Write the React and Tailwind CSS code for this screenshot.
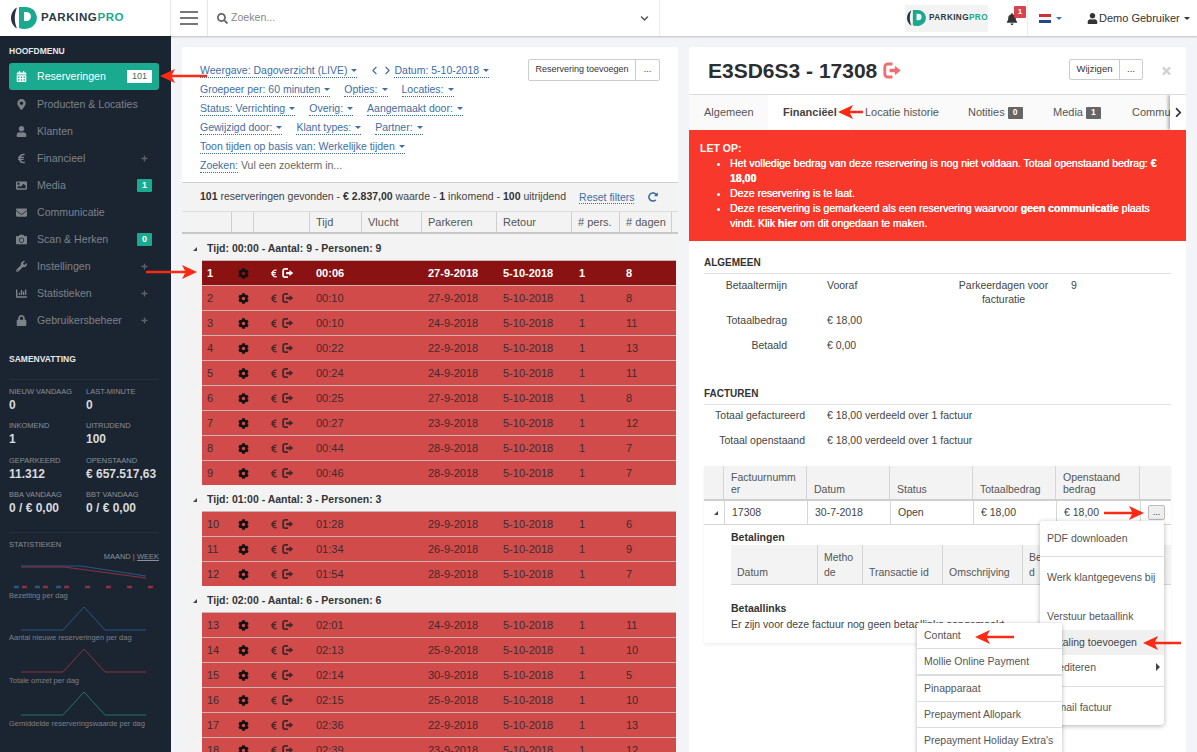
import {
  FaBell, FaCalendarAlt, FaCamera, FaChartBar, FaChevronDown, FaChevronRight, FaCog, FaEnvelope, FaEuroSign,
  FaImage, FaLock, FaMapMarkerAlt, FaPlus, FaRedoAlt, FaSearch, FaTimes, FaUser, FaWrench,
} from 'react-icons/fa';
import { ChevronLeft, ChevronRight } from 'lucide-react';

const menu = [
  { label: 'Reserveringen', icon: FaCalendarAlt, active: true, count: '101' },
  { label: 'Producten & Locaties', icon: FaMapMarkerAlt },
  { label: 'Klanten', icon: FaUser },
  { label: 'Financieel', icon: FaEuroSign, plus: true },
  { label: 'Media', icon: FaImage, badge: '1' },
  { label: 'Communicatie', icon: FaEnvelope },
  { label: 'Scan & Herken', icon: FaCamera, badge: '0' },
  { label: 'Instellingen', icon: FaWrench, plus: true },
  { label: 'Statistieken', icon: FaChartBar, plus: true },
  { label: 'Gebruikersbeheer', icon: FaLock, plus: true },
];

const stats = [
  ['NIEUW VANDAAG', '0', 'LAST-MINUTE', '0'],
  ['INKOMEND', '1', 'UITRIJDEND', '100'],
  ['GEPARKEERD', '11.312', 'OPENSTAAND', '€ 657.517,63'],
  ['BBA VANDAAG', '0 / € 0,00', 'BBT VANDAAG', '0 / € 0,00'],
];

const groups = [
  {
    title: 'Tijd: 00:00 - Aantal: 9 - Personen: 9',
    rows: [
      ['1', '00:06', '27-9-2018', '8'],
      ['2', '00:10', '27-9-2018', '8'],
      ['3', '00:10', '24-9-2018', '11'],
      ['4', '00:22', '22-9-2018', '13'],
      ['5', '00:24', '24-9-2018', '11'],
      ['6', '00:25', '27-9-2018', '8'],
      ['7', '00:27', '23-9-2018', '12'],
      ['8', '00:44', '28-9-2018', '7'],
      ['9', '00:46', '28-9-2018', '7'],
    ],
  },
  {
    title: 'Tijd: 01:00 - Aantal: 3 - Personen: 3',
    rows: [
      ['10', '01:28', '29-9-2018', '6'],
      ['11', '01:34', '26-9-2018', '9'],
      ['12', '01:54', '28-9-2018', '7'],
    ],
  },
  {
    title: 'Tijd: 02:00 - Aantal: 6 - Personen: 6',
    rows: [
      ['13', '02:01', '24-9-2018', '11'],
      ['14', '02:13', '25-9-2018', '10'],
      ['15', '02:14', '30-9-2018', '5'],
      ['16', '02:15', '25-9-2018', '10'],
      ['17', '02:36', '22-9-2018', '13'],
      ['18', '02:39', '23-9-2018', '12'],
    ],
  },
];

const filterLines = [
  ['Groepeer per: 60 minuten', 'Opties:', 'Locaties:'],
  ['Status: Verrichting', 'Overig:', 'Aangemaakt door:'],
  ['Gewijzigd door:', 'Klant types:', 'Partner:'],
  ['Toon tijden op basis van: Werkelijke tijden'],
];

const Caret = ({ className = '' }) => (
  <span className={`inline-block w-0 h-0 border-x-[3px] border-x-transparent border-t-[3px] border-t-current align-middle ${className}`} />
);

const LogOut = ({ className = '', size = 12 }) => (
  <svg viewBox="0 0 16 14" width={size} height={size} className={className}>
    <path d="M8 1.500H4A2.500 2.500 0 0 0 1.500 4v6A2.500 2.500 0 0 0 4 12.500h4" fill="none" stroke="currentColor" strokeWidth="2.400" />
    <path d="M5.500 5.500H10V3l5 4-5 4V8.500H5.500z" fill="currentColor" />
  </svg>
);

// red annotation arrow, tip points left or right
const Arrow = ({ x, y, length, dir = 'left' }) => (
  <svg
    width={length}
    height="14"
    viewBox={`0 0 ${length} 14`}
    className="absolute z-30"
    style={{ left: x, top: y - 7, transform: dir === 'right' ? 'scaleX(-1)' : undefined }}
  >
    <path d={`M0 7 L15 0 L12 5.800 L${length} 5.800 L${length} 8.200 L12 8.200 L15 14 Z`} fill="#fb2a14" />
  </svg>
);

const Logo = ({ small }) => (
  <div className={`flex items-center ${small ? 'gap-[3px]' : 'gap-[4px]'}`}>
    <svg viewBox="0 0 26 22" width={small ? 19 : 26} height={small ? 16 : 22}>
      <path d="M6 .5C2 2.500 0 7 0 11s2 8.500 6 10.500C4.500 18 3.800 14.500 3.800 11S4.500 4 6 .5z" fill="#27343f" />
      <path fillRule="evenodd" d="M8 0h7a10.800 10.800 0 0 1 3 21.200C15 22.300 11 22.200 8 21zM13 5v9h2.500a4.500 4.500 0 0 0 0-9z" fill="#1aa98f" />
    </svg>
    <span className={`font-bold ${small ? 'text-[8.200px] tracking-[0.4px]' : 'text-[11.500px] tracking-[0.6px]'} text-[#2a3a45]`}>
      PARKING<span className="text-[#1aa98f]">PRO</span>
    </span>
  </div>
);

const Spark = ({ points, color }) => (
  <svg width="150" height="30" viewBox="0 0 150 30" className="block">
    <polyline points={points} fill="none" stroke={color} strokeWidth="1" />
  </svg>
);

const Sidebar = () => (
  <aside className="w-[171px] shrink-0 bg-[#1b2532] overflow-hidden">
    <div className="px-[9px] pt-[9px] text-[8.500px] font-bold text-[#e6e8ea] leading-3">HOOFDMENU</div>
    <div className="mt-[6px]">
      {menu.map((m) => (
        <div
          key={m.label}
          className={`ml-[9px] mr-[12px] h-[27px] flex items-center pl-[7px] pr-[7px] text-[10.600px] ${m.active ? 'bg-[#1aaa8f] rounded-[3px] text-white h-[26px] mb-px' : 'text-[#7d8289]'}`}
        >
          <m.icon className="w-[11px] h-[11px] shrink-0" />
          <span className="ml-[10px] flex-1 whitespace-nowrap">{m.label}</span>
          {m.count && <span className="w-[25px] h-[13px] bg-white text-[#3d6a60] text-[9px] flex items-center justify-center rounded-[1px]">{m.count}</span>}
          {m.badge && <span className="w-[15px] h-[13px] bg-[#1aaa8f] text-white text-[9px] font-bold flex items-center justify-center rounded-[1px]">{m.badge}</span>}
          {m.plus && <FaPlus className="w-[7px] h-[7px] mr-1 text-[#5c636b]" />}
        </div>
      ))}
    </div>

    <div className="px-[9px] mt-[19px] text-[8.500px] font-bold text-[#e6e8ea] leading-3">SAMENVATTING</div>
    <div className="ml-[9px] mr-[12px] mt-[14px] border-t border-[#262f3c] pt-[6px] h-[153px]">
      {stats.map((s) => (
        <div key={s[0]} className="grid grid-cols-[77px_1fr] h-[34.300px]">
          <div>
            <div className="text-[7.500px] leading-[11px] text-[#8a8f95] whitespace-nowrap">{s[0]}</div>
            <div className="text-[12px] font-bold leading-[17px] text-[#d8dadd] whitespace-nowrap">{s[1]}</div>
          </div>
          <div>
            <div className="text-[7.500px] leading-[11px] text-[#8a8f95] whitespace-nowrap">{s[2]}</div>
            <div className="text-[12px] font-bold leading-[17px] text-[#d8dadd] whitespace-nowrap">{s[3]}</div>
          </div>
        </div>
      ))}
    </div>

    <div className="ml-[9px] mr-[12px] border-t border-[#262f3c] pt-[6px] h-[170px]">
      <div className="text-[7.500px] leading-[11px] text-[#8a8f95]">STATISTIEKEN</div>
      <div className="text-right text-[7.500px] leading-[11px] mt-[1px] text-[#8a8f95]">MAAND | <span className="underline">WEEK</span></div>
      <svg width="150" height="28" viewBox="0 0 150 28" className="block mt-[1px]">
        <polyline points="12,3 72,3 137,13" fill="none" stroke="#2b5488" strokeWidth="1.200" />
        <polyline points="12,4 55,4 137,15" fill="none" stroke="#8c323e" strokeWidth="1.200" />
        <path d="M5 24h5M26 24h5M47 24h5" stroke="#2b5488" strokeWidth="2.400" />
        <path d="M13 24h5M34 24h5M55 24h5M76 24h5M97 24h5M118 24h5M139 24h5" stroke="#8c323e" strokeWidth="2.400" />
      </svg>
      <div className="text-[7.500px] leading-[11px] text-[#7b8087] whitespace-nowrap mt-[-1px]">Bezetting per dag</div>
      <Spark points="12,29 54,29 75,6 96,29 137,29" color="#2b5488" />
      <div className="text-[7.500px] leading-[11px] text-[#7b8087] whitespace-nowrap mt-[1px]">Aantal nieuwe reserveringen per dag</div>
      <Spark points="12,29 54,29 75,6 96,29 137,29" color="#8c323e" />
      <div className="text-[7.500px] leading-[11px] text-[#7b8087] whitespace-nowrap mt-[2px]">Totale omzet per dag</div>
      <Spark points="12,29 54,29 75,6 96,29 137,29" color="#1d7767" />
      <div className="text-[7.500px] leading-[11px] text-[#7b8087] whitespace-nowrap mt-[2px]">Gemiddelde reserveringswaarde per dag</div>
    </div>
  </aside>
);

const Topbar = () => (
  <header className="relative z-10 h-[36px] bg-white shadow-[0_1px_2px_rgba(0,0,0,0.22)] flex items-center text-[#444]">
    <div className="w-[171px] h-full flex items-center pl-[11px] border-r border-[#e6e6e6]">
      <Logo />
    </div>
    <div className="w-[37px] h-full flex flex-col gap-[3.500px] justify-center px-[9px] border-r border-[#e6e6e6]">
      <span className="h-[2.500px] bg-[#777]" />
      <span className="h-[2.500px] bg-[#777]" />
      <span className="h-[2.500px] bg-[#777]" />
    </div>
    <div className="w-[452px] h-full flex items-center pl-[9px] pr-[10px] border-r border-[#ececec]">
      <FaSearch className="w-[11px] h-[11px] text-[#666]" />
      <span className="ml-[3px] flex-1 text-[10.600px] text-[#888]">Zoeken...</span>
      <FaChevronDown className="w-[9px] h-[9px] text-[#555]" />
    </div>
    <div className="flex-1 h-full flex items-center">
      <div className="ml-[245px] w-[83px] h-[27px] bg-[#f3f3f3] flex items-center pl-[2px]">
        <Logo small />
      </div>
      <div className="relative ml-[18px] w-[22px] h-full flex items-center">
        <FaBell className="w-[12px] h-[12px] text-[#333] mt-[2px]" />
        <span className="absolute left-[8px] top-[6px] w-[12px] h-[12px] bg-[#d9434e] rounded-[1px] text-white text-[8px] font-bold flex items-center justify-center">1</span>
      </div>
      <div className="ml-[-1px] h-full border-l border-[#ececec] pl-[11px] flex items-center">
        <div className="w-[12px] h-[9px] flex flex-col">
          <span className="h-[3px] bg-[#c8303c]" />
          <span className="h-[3px] bg-[#f4f4f4]" />
          <span className="h-[3px] bg-[#21468b]" />
        </div>
        <Caret className="ml-[5px] text-[#3a76b8]" />
      </div>
      <FaUser className="ml-[25px] w-[11px] h-[11px] text-[#333]" />
      <span className="ml-[1px] text-[11px] text-[#333] whitespace-nowrap">Demo Gebruiker</span>
      <Caret className="ml-[4px] text-[#333]" />
    </div>
  </header>
);

const FilterLink = ({ children }) => (
  <span className="inline-flex items-center text-[#3e6ea3] border-b border-dotted border-[#3e6ea3] leading-[13px] whitespace-nowrap">
    {children}
    <Caret className="ml-[4px]" />
  </span>
);

const headerCols = 'grid grid-cols-[50px_22px_56px_52px_60px_75px_75px_48px_52px]';

const LeftPanel = () => (
  <section className="w-[496px] bg-white flex flex-col overflow-hidden rounded-t-[2px]">
    <div className="relative h-[136px] shrink-0 border-b border-[#cfcfcf] pt-[17px] pl-[18px] text-[10.500px]">
      <div className="h-[19px] flex items-start">
        <FilterLink>Weergave: Dagoverzicht (LIVE)</FilterLink>
        <span className="ml-[11px] flex text-[#3e6ea3]">
          <ChevronLeft size={13} strokeWidth={2} />
          <ChevronRight size={13} strokeWidth={2} />
        </span>
        <FilterLink>Datum: 5-10-2018</FilterLink>
      </div>
      {filterLines.map((line) => (
        <div key={line[0]} className="h-[19px] flex items-start gap-[14px]">
          {line.map((l) => <FilterLink key={l}>{l}</FilterLink>)}
        </div>
      ))}
      <div className="h-[19px] flex items-start">
        <span className="text-[#3e6ea3] border-b border-dotted border-[#3e6ea3] leading-[13px]">Zoeken:</span>
        <span className="ml-[3px] leading-[13px] text-[#666]">Vul een zoekterm in...</span>
      </div>
      <div className="absolute right-[18px] top-[12px] h-[22px] flex text-[9px] text-[#333] border border-[#ccc] rounded-[2px]">
        <span className="w-[107px] flex items-center justify-center border-r border-[#ccc]">Reservering toevoegen</span>
        <span className="w-[23px] flex items-center justify-center">...</span>
      </div>
    </div>

    <div className="h-[28px] shrink-0 bg-[#f3f3f3] flex items-center pl-[18px] text-[10.500px] text-[#444] whitespace-nowrap">
      <span><b className="text-[#333]">101</b> reserveringen gevonden - <b className="text-[#333]">€ 2.837,00</b> waarde - <b className="text-[#333]">1</b> inkomend - <b className="text-[#333]">100</b> uitrijdend</span>
      <span className="ml-[13px] text-[#3e6ea3] border-b border-dotted border-[#3e6ea3] leading-[12px]">Reset filters</span>
      <FaRedoAlt className="ml-[14px] w-[10px] h-[10px] text-[#3e6ea3]" />
    </div>

    <div className={`${headerCols} h-[23px] shrink-0 bg-[#f3f3f3] border-y border-y-[#dcdcdc] border-b-[#c8c8c8] border-b-2 text-[11px] text-[#555]`}>
      {['', '', '', 'Tijd', 'Vlucht', 'Parkeren', 'Retour', '# pers.', '# dagen'].map((h, i) => (
        <div key={i} className="border-r border-[#cfcfcf] flex items-center pl-[6px]">{h}</div>
      ))}
    </div>

    <div className="flex-1 bg-[#f3f3f3] overflow-hidden">
      {groups.map((g) => (
        <div key={g.title}>
          <div className="h-[26px] flex items-center pt-[3px] pl-[11px] text-[10.500px] font-bold text-[#333]">
            <span className="w-0 h-0 border-l-[4px] border-l-transparent border-b-[4px] border-b-[#444]" />
            <span className="ml-[10px]">{g.title}</span>
          </div>
          {g.rows.map((r) => {
            const selected = r[0] === '1';
            return (
              <div
                key={r[0]}
                className={`ml-5 mr-[2px] h-[25px] border-t border-[#cdb4b4] grid grid-cols-[30px_22px_56px_52px_60px_75px_75px_48px_52px] items-center text-[11px] ${selected ? 'bg-[#8a1212] text-white font-bold' : 'bg-[#d14b4b] text-[#3d2b2b]'}`}
              >
                <span className="pl-[5px]">{r[0]}</span>
                <span className="flex justify-center"><FaCog className="w-[11px] h-[11px] text-[#111]" /></span>
                <span className="flex items-center pl-[16px]">
                  <FaEuroSign className="w-[8px] h-[9px]" />
                  <LogOut className="ml-[4px]" />
                </span>
                <span className="pl-[6px]">{r[1]}</span>
                <span />
                <span className="pl-[6px]">{r[2]}</span>
                <span className="pl-[6px]">5-10-2018</span>
                <span className="pl-[7px]">1</span>
                <span className="pl-[6px]">{r[3]}</span>
              </div>
            );
          })}
        </div>
      ))}
    </div>
  </section>
);

const tabs = [
  { label: 'Algemeen', w: 'w-[79px]' },
  { label: 'Financiëel', w: 'w-[82px]', active: true },
  { label: 'Locatie historie', w: 'w-[103px]' },
  { label: 'Notities', badge: '0', w: 'w-[85px]' },
  { label: 'Media', badge: '1', w: 'w-[79px]' },
  { label: 'Communicatie', w: 'w-[90px]' },
];

const Section = ({ title, children, className = '' }) => (
  <div className={className}>
    <div className="text-[10px] font-bold text-[#333] leading-3 pb-[4px] border-b border-[#e2e2e2]">{title}</div>
    {children}
  </div>
);

const RightPanel = () => (
  <section className="relative w-[497px] ml-[11px] bg-white text-[10.500px] text-[#444] overflow-hidden rounded-t-[2px]">
    <div className="relative h-[48px] border-b border-[#dcdcdc] flex items-center pl-[19px]">
      <h1 className="text-[21px] font-bold text-[#2b2f33] leading-none whitespace-nowrap">E3SD6S3 - 17308</h1>
      <LogOut size={19} className="ml-[6px] text-[#ef6f70]" />
      <div className="absolute right-[43px] top-[12px] h-[21px] flex text-[9.500px] text-[#333] border border-[#ccc] rounded-[2px]">
        <span className="w-[50px] flex items-center justify-center border-r border-[#ccc]">Wijzigen</span>
        <span className="w-[22px] flex items-center justify-center">...</span>
      </div>
      <FaTimes className="absolute right-[14px] top-[18px] w-[11px] h-[12px] text-[#cfcfcf]" />
    </div>

    <div className="relative h-[35px] bg-[#fafafa] flex text-[11px] text-[#555] overflow-hidden whitespace-nowrap">
      {tabs.map((t) => (
        <div key={t.label} className={`${t.w} shrink-0 h-full flex items-center pl-[15px] ${t.active ? 'bg-white font-bold text-[#444]' : ''}`}>
          {t.label}
          {t.badge && <span className="ml-[3px] w-[15px] h-[12px] bg-[#666] text-white text-[8.500px] font-bold flex items-center justify-center rounded-[1px]">{t.badge}</span>}
        </div>
      ))}
      <div className="absolute right-0 top-0 w-[16px] h-full bg-white shadow-[-2px_0_3px_rgba(0,0,0,0.3)] flex items-center justify-center">
        <FaChevronRight className="w-[9px] h-[11px] text-[#333]" />
      </div>
    </div>

    <div className="h-[111px] bg-[#f8382b] text-white font-bold text-[10.500px] leading-[15px] pl-[11px] pr-[20px] pt-[11px]">
      <div>LET OP:</div>
      <ul className="list-disc pl-[30px] font-normal [text-shadow:0.2px_0_0_white]">
        <li>Het volledige bedrag van deze reservering is nog niet voldaan. Totaal openstaand bedrag: <b>€ 18,00</b></li>
        <li>Deze reservering is te laat.</li>
        <li>Deze reservering is gemarkeerd als een reservering waarvoor <b>geen communicatie</b> plaats vindt. Klik <b>hier</b> om dit ongedaan te maken.</li>
      </ul>
    </div>

    <div className="px-[15px]">
      <Section title="ALGEMEEN" className="pt-[16px]">
        <div className="grid grid-cols-[83px_1fr] gap-x-[40px] auto-rows-[25.500px] mt-[4px] h-[96px]">
          <div className="text-right leading-[14px]">Betaaltermijn</div>
          <div className="flex leading-[14px]">
            <span className="w-[117px]">Vooraf</span>
            <span className="w-[119px] text-center">Parkeerdagen voor facturatie</span>
            <span className="ml-[8px]">9</span>
          </div>
          <div className="text-right pt-[9px] leading-[14px]">Totaalbedrag</div>
          <div className="pt-[9px] leading-[14px]">€ 18,00</div>
          <div className="text-right pt-[9px] leading-[14px]">Betaald</div>
          <div className="pt-[9px] leading-[14px]">€ 0,00</div>
        </div>
      </Section>

      <Section title="FACTUREN" className="pt-[14px]">
        <div className="grid grid-cols-[101px_1fr] gap-x-[22px] auto-rows-[25px] mt-[3px] leading-[14px]">
          <div className="text-right whitespace-nowrap">Totaal gefactureerd</div>
          <div>€ 18,00 verdeeld over 1 factuur</div>
          <div className="text-right whitespace-nowrap">Totaal openstaand</div>
          <div>€ 18,00 verdeeld over 1 factuur</div>
        </div>
      </Section>

      <div className="mt-[8px] w-[467px] pb-[12px] shadow-[0_2px_3px_rgba(0,0,0,0.06)]">
        <div className="grid grid-cols-[20px_83px_83px_83px_83px_84px_1fr] h-[35px] bg-[#f3f3f3] border-b-2 border-[#cfcfcf] text-[#555] leading-[12px]">
          {['', 'Factuurnummer', 'Datum', 'Status', 'Totaalbedrag', 'Openstaand bedrag', ''].map((h, i) => (
            <div key={i} className={`flex items-end pl-[7px] pr-[7px] pb-[4px] ${i < 6 ? 'border-r border-[#d6d6d6]' : ''}`}>
              <span className={i === 1 ? 'break-all' : ''}>{h}</span>
            </div>
          ))}
        </div>
        <div className="grid grid-cols-[20px_83px_83px_83px_83px_84px_1fr] h-[24px] border-b border-[#d6d6d6] items-center">
          <span className="ml-[10px] w-0 h-0 border-l-[4px] border-l-transparent border-b-[4px] border-b-[#444]" />
          {['17308', '30-7-2018', 'Open', '€ 18,00', '€ 18,00'].map((c, i) => (
            <div key={i} className="h-full flex items-center pl-[7px] border-l border-[#d6d6d6]">{c}</div>
          ))}
          <div className="h-full flex items-center justify-end pr-[6px] border-l border-[#d6d6d6]">
            <span className="w-[17px] h-[15px] bg-[#eee] border border-[#bbb] rounded-[2px] flex items-center justify-center text-[9px] text-[#333]">...</span>
          </div>
        </div>
        <div className="pl-[27px] pt-[5px]">
          <div className="font-bold text-[#333] leading-[14px]">Betalingen</div>
          <div className="grid grid-cols-[87px_45px_80px_80px_45px_1fr] h-[40px] bg-[#f3f3f3] border-b border-[#d6d6d6] text-[#555] mt-[1px] leading-[15px]">
            {['Datum', 'Methode', 'Transactie id', 'Omschrijving', 'Betaald', ''].map((h, i) => (
              <div key={i} className={`flex items-end pl-[6px] pr-[6px] pb-[4px] ${i < 5 ? 'border-r border-[#d6d6d6]' : ''}`}>
                <span className={i === 1 || i === 4 ? 'break-all' : ''}>{h}</span>
              </div>
            ))}
          </div>
          <div className="font-bold text-[#333] mt-[16px] leading-[14px]">Betaallinks</div>
          <div className="mt-[2px] leading-[14px]">Er zijn voor deze factuur nog geen betaallinks aangemaakt.</div>
        </div>
      </div>
    </div>

    {/* dropdown van de factuur */}
    <div className="absolute z-10 left-[351px] top-[474px] w-[124px] h-[204px] bg-white rounded-[3px] shadow-[0_1px_5px_rgba(0,0,0,0.3)] text-[10.500px] text-[#555]">
      <div className="h-[36px] border-b border-[#ddd] pl-[7px] pt-[10px] leading-[14px]">PDF downloaden</div>
      <div className="h-[40px] pl-[7px] pt-[13px] leading-[14px] whitespace-nowrap">Werk klantgegevens bij</div>
      <div className="h-[33px] pl-[7px] pt-[12px] leading-[14px]">Verstuur betaallink</div>
      <div className="h-[25px] bg-[#f0f0f0] pl-[7px] flex items-center text-[#444]">Betaling toevoegen</div>
      <div className="h-[32px] border-b border-[#ddd] pl-[7px] pt-[5px] leading-[14px] flex justify-between pr-[4px]">
        Crediteren
        <span className="mt-[3px] w-0 h-0 border-y-[4px] border-y-transparent border-l-[4px] border-l-[#444]" />
      </div>
      <div className="pl-[7px] pt-[13px] leading-[14px]">E-mail factuur</div>
    </div>

    {/* submenu betaling toevoegen */}
    <div className="absolute z-20 left-[228px] top-[576px] w-[145px] bg-white rounded-[2px] shadow-[0_1px_4px_rgba(0,0,0,0.3)] text-[10.500px] text-[#555]">
      <div className="h-[26px] border-b border-[#ddd] pl-[7px] flex items-center">Contant</div>
      <div className="h-[27px] border-b-2 border-[#ddd] pl-[7px] flex items-center">Mollie Online Payment</div>
      <div className="h-[26px] border-b border-[#ddd] pl-[7px] flex items-center">Pinapparaat</div>
      <div className="h-[26px] border-b border-[#ddd] pl-[7px] flex items-center">Prepayment Allopark</div>
      <div className="h-[26px] pl-[7px] flex items-center whitespace-nowrap">Prepayment Holiday Extra's</div>
    </div>
  </section>
);

export default function App() {
  return (
    <div className="relative w-[1197px] h-[752px] overflow-hidden flex flex-col bg-[#f3f4f7] font-['Liberation_Sans',Arial,sans-serif]">
      <Topbar />
      <div className="flex flex-1 min-h-0">
        <Sidebar />
        <main className="flex-1 flex pl-[11px] pt-[11px]">
          <LeftPanel />
          <RightPanel />
        </main>
      </div>
      <Arrow x={160} y={76} length={47} />
      <Arrow x={146} y={272} length={51} dir="right" />
      <Arrow x={838} y={112} length={25} />
      <Arrow x={1104} y={513} length={40} dir="right" />
      <Arrow x={1143} y={643} length={38} />
      <Arrow x={975} y={637} length={39} />
    </div>
  );
}
